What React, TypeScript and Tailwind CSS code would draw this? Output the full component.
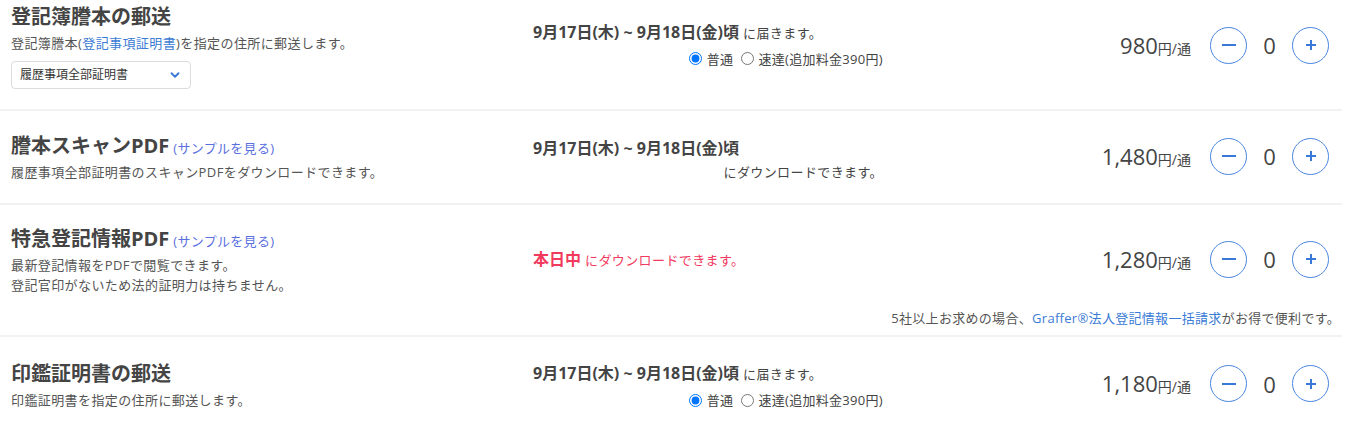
import { ChevronDown } from 'lucide-react';

const FONT = { fontFamily: '"Open Sans", "Noto Sans CJK JP", sans-serif' };

function Stepper() {
  return (
    <div className="flex items-center">
      <button className="flex h-[37px] w-[37px] items-center justify-center rounded-full border border-[#4a86e0] bg-white">
        <svg width="16" height="4" viewBox="0 0 16 4">
          <rect x="1" y="1" width="14" height="2" fill="#3a78d8" />
        </svg>
      </button>
      <span className="w-[45px] text-center text-[22px] leading-none text-[#444]">0</span>
      <button className="flex h-[37px] w-[37px] items-center justify-center rounded-full border border-[#4a86e0] bg-white">
        <svg width="12" height="12" viewBox="0 0 12 12">
          <rect x="1" y="5" width="10" height="2" fill="#3a78d8" />
          <rect x="5" y="1" width="2" height="10" fill="#3a78d8" />
        </svg>
      </button>
    </div>
  );
}

function Price({ value }: { value: string }) {
  return (
    <div className="flex items-center justify-end pr-[13px]">
      <span className="text-[#444]">
        <span className="text-[22px]">{value}</span>
        <span className="text-[14px]">円/通</span>
      </span>
      <div className="ml-[19px]">
        <Stepper />
      </div>
    </div>
  );
}

function DateLine({ suffix }: { suffix?: string }) {
  return (
    <p className="h-5 leading-5 text-[#444]">
      <span className="text-[16px] font-bold">9月17日(木) ~ 9月18日(金)頃</span>
      {suffix && <span className="ml-1 text-[13px] tracking-[0.4px]">{suffix}</span>}
    </p>
  );
}

function Delivery({ name }: { name: string }) {
  return (
    <div className="mt-[7px] flex h-5 items-center justify-end text-[13px] leading-5 tracking-[0.3px] text-[#444]">
      <label className="flex items-center">
        <input type="radio" name={name} defaultChecked className="m-0 h-[13px] w-[13px]" />
        <span className="ml-[5px]">普通</span>
      </label>
      <label className="ml-[8px] flex items-center">
        <input type="radio" name={name} className="m-0 h-[13px] w-[13px]" />
        <span className="ml-[4px]">速達(追加料金390円)</span>
      </label>
    </div>
  );
}

function Title({ text, sample }: { text: string; sample?: boolean }) {
  return (
    <h3 className="h-8 overflow-hidden leading-8 text-[#444]">
      <span className="text-[20px] font-bold">{text}</span>
      {sample && <span className="ml-1 text-[13px] tracking-[0.3px] text-[#5a6fe0]">(サンプルを見る)</span>}
    </h3>
  );
}

function Desc({ children }: { children: React.ReactNode }) {
  return <p className="h-5 text-[13px] leading-5 tracking-[0.4px] text-[#555]">{children}</p>;
}

function Row({ left, middle, price }: { left: React.ReactNode; middle: React.ReactNode; price: string }) {
  return (
    <div className="flex items-center">
      <div className="w-[533px] pl-[11px]">{left}</div>
      <div className="w-[350px]">{middle}</div>
      <div className="flex-1">
        <Price value={price} />
      </div>
    </div>
  );
}

export default function App() {
  return (
    <div className="w-[1342px] bg-white" style={FONT}>
      <div className="border-b-2 border-[#f2f2f2] pt-[1px] pb-[20px]">
        <Row
          price="980"
          left={
            <div>
              <Title text="登記簿謄本の郵送" />
              <Desc>
                登記簿謄本(<span className="text-[#3a7bd5]">登記事項証明書</span>)を指定の住所に郵送します。
              </Desc>
              <div className="mt-[8px] flex h-[28px] w-[180px] items-center justify-between rounded-[4px] border border-[#dcdcdc] pl-2 pr-[8px]">
                <span className="text-[12px] text-[#333]">履歴事項全部証明書</span>
                <ChevronDown size={14} strokeWidth={3.2} color="#3a78d8" />
              </div>
            </div>
          }
          middle={
            <div>
              <DateLine suffix="に届きます。" />
              <Delivery name="d1" />
            </div>
          }
        />
      </div>

      <div className="border-b-2 border-[#f2f2f2] pt-[19px] pb-[21px]">
        <Row
          price="1,480"
          left={
            <div>
              <Title text="謄本スキャンPDF" sample />
              <Desc>履歴事項全部証明書のスキャンPDFをダウンロードできます。</Desc>
            </div>
          }
          middle={
            <div className="pt-[7px]">
              <DateLine />
              <p className="mt-[4px] h-5 text-right text-[13px] leading-5 tracking-[0.4px] text-[#444]">にダウンロードできます。</p>
            </div>
          }
        />
      </div>

      <div className="border-b-2 border-[#f2f2f2] pt-[18px] pb-[7px]">
        <Row
          price="1,280"
          left={
            <div>
              <Title text="特急登記情報PDF" sample />
              <Desc>最新登記情報をPDFで閲覧できます。</Desc>
              <Desc>登記官印がないため法的証明力は持ちません。</Desc>
            </div>
          }
          middle={
            <p className="h-5 leading-5 text-[#f23a5e]">
              <span className="text-[16px] font-bold">本日中</span>
              <span className="ml-1 text-[13px] tracking-[0.4px]">にダウンロードできます。</span>
            </p>
          }
        />
        <p className="mt-[13px] h-5 pr-[2px] text-right text-[13px] leading-5 tracking-[0.3px] text-[#555]">
          5社以上お求めの場合、<span className="text-[#3a7bd5]">Graffer®法人登記情報一括請求</span>がお得で便利です。
        </p>
      </div>

      <div className="pt-[20px] pb-[20px]">
        <Row
          price="1,180"
          left={
            <div>
              <Title text="印鑑証明書の郵送" />
              <Desc>印鑑証明書を指定の住所に郵送します。</Desc>
            </div>
          }
          middle={
            <div className="pt-[6px]">
              <DateLine suffix="に届きます。" />
              <Delivery name="d4" />
            </div>
          }
        />
      </div>
    </div>
  );
}
